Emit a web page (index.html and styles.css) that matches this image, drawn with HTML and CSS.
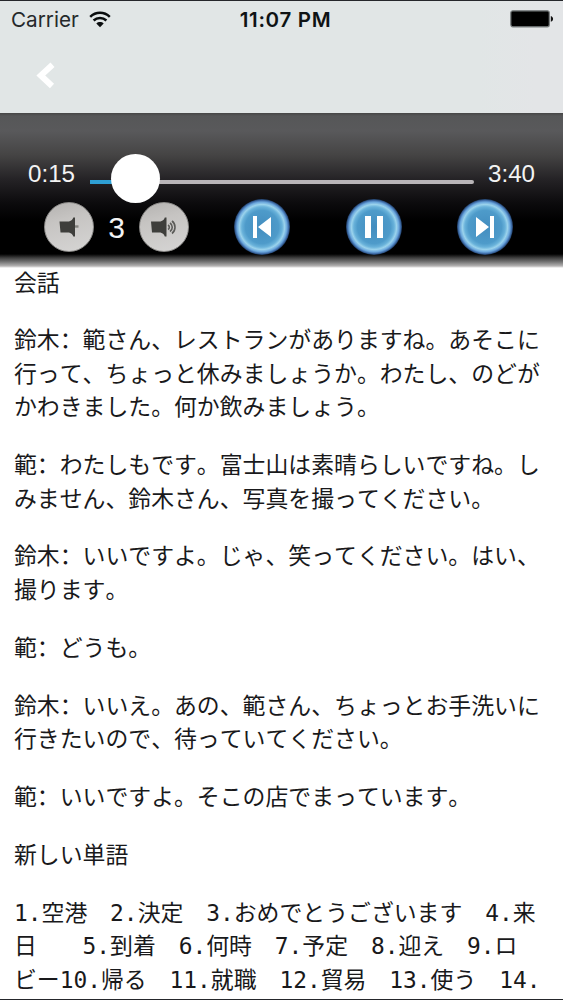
FILE: index.html
```html
<!DOCTYPE html>
<html lang="ja">
<head>
    <meta charset="UTF-8">
    <meta name="viewport" content="width=device-width, initial-scale=1.0">
    <title>会話</title>
    <link rel="stylesheet" href="styles.css">
</head>
<body>
    <div class="screen">
        <div class="header">
            <div class="status-bar">
                <div class="carrier">
                    <span class="carrier-name">Carrier</span>
                    <svg class="wifi" viewBox="0 0 22 17" width="22" height="17">
                        <path d="M1.2 5.8C6.8.5 15.2.5 20.8 5.8M4.6 9.5c3.6-3.4 9.2-3.4 12.8 0" fill="none" stroke="#0a0d0e" stroke-width="2.5"/>
                        <path d="M7.3 12.5c2.1-1.9 5.3-1.9 7.4 0L11 16.2z" fill="#0a0d0e"/>
                    </svg>
                </div>
                <span class="clock">11:07 PM</span>
                <svg class="battery" viewBox="0 0 44 18" width="44" height="18">
                    <rect x=".8" y=".8" width="38.5" height="16" rx="2" fill="#000" stroke="#777c7d" stroke-width="1.2"/>
                    <path d="M40.8 6c3 .8 3 5 0 5.8z" fill="#111"/>
                </svg>
            </div>
            <div class="nav-bar">
                <svg class="back" viewBox="0 0 20 27" width="20" height="27">
                    <path d="M16.5 2.8L4.8 13.5L16 24" fill="none" stroke="#fff" stroke-width="6"/>
                </svg>
            </div>
        </div>

        <div class="player">
            <div class="progress">
                <span class="time">0:15</span>
                <div class="track">
                    <div class="played"></div>
                    <div class="knob"></div>
                </div>
                <span class="time">3:40</span>
            </div>
            <div class="controls">
                <div class="volume">
                    <div class="vol-button">
                        <svg viewBox="0 0 50 50" width="50" height="50">
                            <path d="M15.5 19.5H25c2.500-.8 3.800-2 4.300-4H31v19h-1.700c-.5-2-1.800-3.200-4.300-4h-8.500z" fill="#3e3e3b"/>
                            <path d="M31 23.300h3.500v2.400H31z" fill="#84837f"/>
                        </svg>
                    </div>
                    <span class="vol-level">3</span>
                    <div class="vol-button">
                        <svg viewBox="0 0 50 50" width="50" height="50">
                            <path d="M12 19.5h9.500c2.500-.8 3.800-2 4.300-4h1.700v19h-1.700c-.5-2-1.800-3.200-4.300-4H13z" fill="#3e3e3b"/>
                            <path d="M29 23c1.800 1 1.800 3.500 0 4.500M31 21c3 2 3 6.500 0 8.500M33 19c4 3 4 9.500 0 12.500" fill="none" stroke="#5b5b58" stroke-width="1.6"/>
                        </svg>
                    </div>
                </div>
                <div class="transport">
                    <div class="play-button">
                        <svg viewBox="0 0 56 56" width="56" height="56">
                            <path d="M19 17h4v22h-4zM37 18v20L24 28z" fill="#fff"/>
                        </svg>
                    </div>
                    <div class="play-button">
                        <svg viewBox="0 0 56 56" width="56" height="56">
                            <path d="M19 17h6v22h-6zM31 17h6v22h-6z" fill="#fff"/>
                        </svg>
                    </div>
                    <div class="play-button">
                        <svg viewBox="0 0 56 56" width="56" height="56">
                            <path d="M33 17h4v22h-4zM19 18v20l13-10z" fill="#fff"/>
                        </svg>
                    </div>
                </div>
            </div>
        </div>

        <div class="lesson">
            <p>会話</p>
            <p>鈴木<span class="colon" lang="zh-CN">：</span>範さん、レストランがありますね。あそこに<br>行って、ちょっと休みましょうか。わたし、のどが<br>かわきました。何か飲みましょう。</p>
            <p>範<span class="colon" lang="zh-CN">：</span>わたしもです。富士山は素晴らしいですね。し<br>みません、鈴木さん、写真を撮ってください。</p>
            <p>鈴木<span class="colon" lang="zh-CN">：</span>いいですよ。じゃ、笑ってください。はい、<br>撮ります。</p>
            <p>範<span class="colon" lang="zh-CN">：</span>どうも。</p>
            <p>鈴木<span class="colon" lang="zh-CN">：</span>いいえ。あの、範さん、ちょっとお手洗いに<br>行きたいので、待っていてください。</p>
            <p>範<span class="colon" lang="zh-CN">：</span>いいですよ。そこの店でまっています。</p>
            <p>新しい単語</p>
            <p>1.空港　2.決定　3.おめでとうございます　4.来<br>日　　5.到着　6.何時　7.予定　8.迎え　9.ロ<br>ビー10.帰る　11.就職　12.貿易　13.使う　14.</p>
        </div>
    </div>
</body>
</html>
```
FILE: styles.css
```css
* {
    box-sizing: border-box;
}
body {
    margin: 0;
    background-color: #fff;
}
.screen {
    height: 1000px;
    overflow: hidden;
    border-top: 1px solid #25272b;
    border-bottom: 1px solid #25272b;
}
.header {
    height: 112px;
    background: linear-gradient(to right, #e1e6e6 85%, #e3e5e7 95%);
}
.status-bar {
    display: grid;
    grid-template-columns: 1fr auto 1fr;
    align-items: center;
    height: 36px;
    padding: 0 9px 0 11px;
    font-family: Inter, sans-serif;
    color: #0f1314;
}
.carrier {
    display: flex;
    align-items: center;
    gap: 10px;
}
.carrier-name {
    font-size: 20.7px;
    color: #25292a;
}
.clock {
    font-size: 20.5px;
    font-weight: 600;
    letter-spacing: 0.7px;
    padding-left: 6px;
}
.battery {
    justify-self: end;
}
.nav-bar {
    padding: 25px 36px;
}
.back {
    display: block;
}
.player {
    height: 155px;
    padding-top: 36px;
    color: #fff;
    font-family: "Liberation Sans", Arial, sans-serif;
    background: linear-gradient(#464646 0, #565758 3px, #59595b 18px, #454444 42px, #252326 66px, #0c0b0d 90px, #000 108px, #000 141px, #414141 145px, #777 149px, #b5b3b3 153px, #fff 155px);
}
.progress {
    display: flex;
    align-items: center;
    height: 50px;
    padding: 0 28px;
}
.time {
    width: 47px;
    font-size: 24.2px;
    white-space: nowrap;
    color: #f3f3f3;
}
.track {
    position: relative;
    flex: 1;
    height: 4px;
    margin: 16px 14px 0 15px;
    border-radius: 2px;
    background-color: #b9b5b8;
}
.played {
    width: 30px;
    height: 4px;
    background-color: #2e9fd4;
}
.knob {
    position: absolute;
    left: 21px;
    top: -26px;
    width: 49px;
    height: 49px;
    border-radius: 50%;
    background-color: #fff;
}
.controls {
    display: flex;
    align-items: center;
    height: 56px;
    padding-left: 44px;
}
.volume {
    display: flex;
    align-items: center;
    width: 190px;
}
.vol-button {
    width: 50px;
    height: 50px;
    border-radius: 50%;
    border: 1px solid #8c8b89;
    background: linear-gradient(165deg, #b4b2b0, #c6c4c2 35%, #d6d5d4);
}
.vol-button svg {
    display: block;
    margin: -1px;
}
.vol-level {
    width: 45px;
    padding-top: 2px;
    text-align: center;
    font-size: 30px;
    color: #f3f3f3;
}
.transport {
    display: flex;
    justify-content: space-between;
    width: 279px;
}
.play-button {
    width: 56px;
    height: 56px;
    border-radius: 50%;
    background: radial-gradient(circle, #438dbf 0, #4e9bca 42%, #69b2da 51%, #9bd3ec 57%, #6aa6dc 63%, #416fab 67%, #1a3558 71%);
}
.play-button svg {
    display: block;
}
.lesson {
    margin-top: -1.5px;
    padding-left: 14px;
    font-family: "DejaVu Sans Mono", "Noto Sans CJK JP", monospace;
    font-size: 22.87px;
    font-kerning: none;
    text-spacing-trim: space-all;
    line-height: 33.4px;
    white-space: nowrap;
    color: #19191b;
}
.lesson p {
    margin: 0 0 24.5px;
}
.colon {
    font-family: "Noto Sans CJK SC", sans-serif;
    line-height: 0;
}
```
